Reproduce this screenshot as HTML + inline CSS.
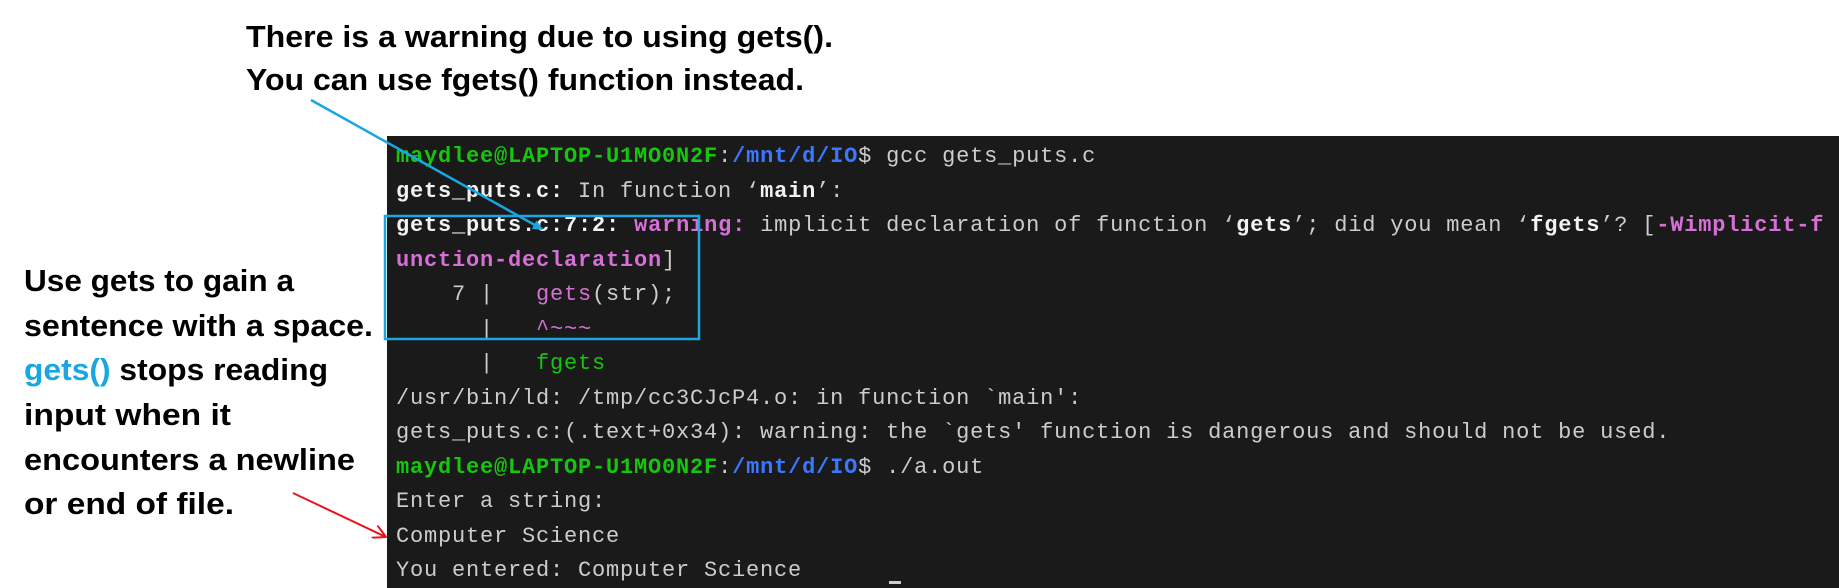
<!DOCTYPE html>
<html><head><meta charset="utf-8"><style>
html,body{margin:0;padding:0;background:#fff;width:1839px;height:588px;overflow:hidden;position:relative}
#term{position:absolute;left:387px;top:136px;width:1452px;height:452px;background:#1a1a1a}
#txt{position:absolute;left:396px;top:140px;font-family:"Liberation Mono",monospace;font-size:22px;letter-spacing:0.8px;line-height:34.5px;color:#cccccc;white-space:pre;margin:0}
.g{color:#16c60c;font-weight:bold}.b{color:#3b78ff;font-weight:bold}.w{color:#f2f2f2;font-weight:bold}.m{color:#d670d6;font-weight:bold}.mn{color:#d670d6}.gn{color:#16c60c}
svg{position:absolute;left:0;top:0}
</style></head><body>
<div id="term"></div>
<pre id="txt"><span class="g">maydlee@LAPTOP-U1MO0N2F</span>:<span class="b">/mnt/d/IO</span>$ gcc gets_puts.c
<span class="w">gets_puts.c:</span> In function ‘<span class="w">main</span>’:
<span class="w">gets_puts.c:7:2:</span> <span class="m">warning:</span> implicit declaration of function ‘<span class="w">gets</span>’; did you mean ‘<span class="w">fgets</span>’? [<span class="m">-Wimplicit-f</span>
<span class="m">unction-declaration</span>]
    7 |   <span class="mn">gets</span>(str);
      |   <span class="mn">^~~~</span>
      |   <span class="gn">fgets</span>
/usr/bin/ld: /tmp/cc3CJcP4.o: in function `main':
gets_puts.c:(.text+0x34): warning: the `gets' function is dangerous and should not be used.
<span class="g">maydlee@LAPTOP-U1MO0N2F</span>:<span class="b">/mnt/d/IO</span>$ ./a.out
Enter a string:
Computer Science
You entered: Computer Science</pre>
<svg width="1839" height="588" viewBox="0 0 1839 588" xmlns="http://www.w3.org/2000/svg">
<defs>
<marker id="ab" markerWidth="10" markerHeight="10" refX="9" refY="5" orient="auto" markerUnits="userSpaceOnUse"><path d="M0,0 L10,5 L0,10 z" fill="#1aa6e0"/></marker>
<marker id="ar" markerWidth="14" markerHeight="14" refX="13" refY="7" orient="auto" markerUnits="userSpaceOnUse"><path d="M0,0 L13,7 L0,14" fill="none" stroke="#e8141b" stroke-width="2"/></marker>
</defs>
<rect x="385" y="216" width="314" height="123" fill="none" stroke="#1aa6e0" stroke-width="2.5"/>
<line x1="311" y1="100" x2="542" y2="229" stroke="#1aa6e0" stroke-width="2.5" marker-end="url(#ab)"/>
<line x1="293" y1="493" x2="386" y2="537" stroke="#e8141b" stroke-width="2" marker-end="url(#ar)"/>
<rect x="889" y="581" width="12" height="3" fill="#cccccc"/>
<g font-family="Liberation Sans, sans-serif" font-weight="bold" font-size="31" fill="#000">
<text x="246" y="47" textLength="587" lengthAdjust="spacingAndGlyphs">There is a warning due to using gets().</text>
<text x="246" y="90" textLength="558" lengthAdjust="spacingAndGlyphs">You can use fgets() function instead.</text>
<text x="24" y="291" textLength="270" lengthAdjust="spacingAndGlyphs">Use gets to gain a</text>
<text x="24" y="336" textLength="349" lengthAdjust="spacingAndGlyphs">sentence with a space.</text>
<text x="24" y="380" textLength="304" lengthAdjust="spacingAndGlyphs"><tspan fill="#1aa6e0">gets()</tspan> stops reading</text>
<text x="24" y="425" textLength="207" lengthAdjust="spacingAndGlyphs">input when it</text>
<text x="24" y="470" textLength="331" lengthAdjust="spacingAndGlyphs">encounters a newline</text>
<text x="24" y="514" textLength="210" lengthAdjust="spacingAndGlyphs">or end of file.</text>
</g>
</svg>
</body></html>
